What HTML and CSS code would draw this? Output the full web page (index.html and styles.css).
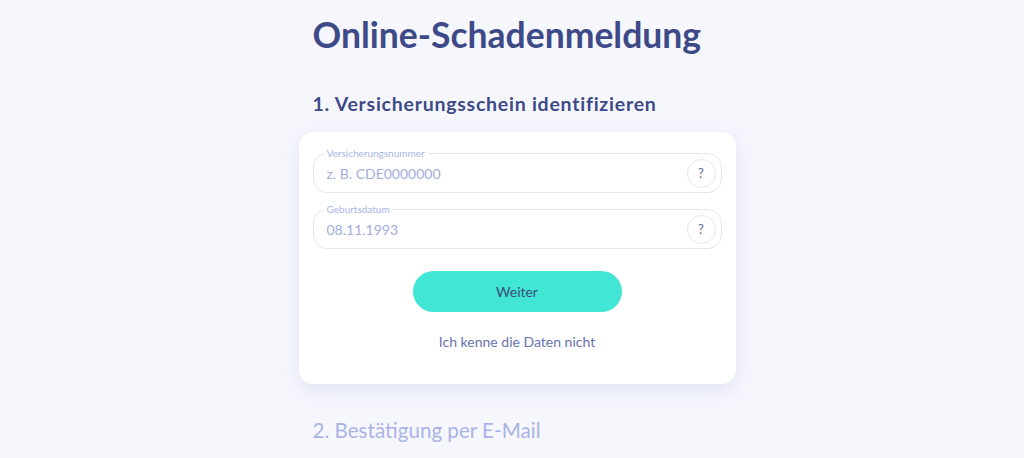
FILE: index.html
```html
<!DOCTYPE html>
<html lang="de">
<head>
  <meta charset="UTF-8">
  <meta name="viewport" content="width=device-width, initial-scale=1.0">
  <title>Online-Schadenmeldung</title>
  <link rel="stylesheet" href="styles.css">
</head>
<body>
  <main class="page">
    <h1 class="title">Online-Schadenmeldung</h1>

    <h2 class="step step-active">1. Versicherungsschein identifizieren</h2>
    <div class="card">
      <div class="field">
        <span class="field-label">Versicherungsnummer</span>
        <input class="field-input" type="text" placeholder="z. B. CDE0000000">
        <button class="help" type="button">?</button>
      </div>
      <div class="field">
        <span class="field-label">Geburtsdatum</span>
        <input class="field-input" type="text" placeholder="08.11.1993">
        <button class="help" type="button">?</button>
      </div>
      <button class="btn-next" type="button">Weiter</button>
      <a class="link" href="#">Ich kenne die Daten nicht</a>
    </div>

    <h2 class="step step-next">2. Bestätigung per E-Mail</h2>
  </main>
</body>
</html>
```

FILE: styles.css
```css
:root {
  --bg: #f6f7fd;
  --navy: #3d4a87;
  --muted: #a9b3e8;
  --border: #e3e6f3;
  --turquoise: #41e6d4;
}
body {
  margin: 0;
  padding-left: 10px;
  background: var(--bg);
  font-family: 'Lato', 'Open Sans', sans-serif;
  color: var(--navy);
}
.page {
  width: 437px;
  margin: 0 auto;
  padding-top: 14px;
}
.title {
  margin: 0 0 0 14px;
  font-size: 35.5px;
  font-weight: 700;
  line-height: 42px;
}
.step {
  margin: 0 0 0 14px;
  line-height: 24px;
}
.step-active {
  margin-top: 36px;
  font-size: 19.5px;
  font-weight: 700;
  letter-spacing: 0.75px;
}
.step-next {
  margin-top: 34px;
  font-weight: 400;
  font-size: 20.6px;
  color: var(--muted);
}
.card {
  margin-top: 16px;
  background: #fff;
  border-radius: 14px;
  box-shadow: 0 6px 18px rgba(180, 188, 230, 0.35);
  padding: 21px 14px 34px;
  display: flex;
  flex-direction: column;
  align-items: center;
}
.field {
  position: relative;
  width: 100%;
  height: 40px;
  box-sizing: border-box;
  border: 1px solid var(--border);
  border-radius: 14px;
  display: flex;
  align-items: center;
  padding: 0 5px 0 13px;
  margin-bottom: 16px;
}
.field:last-of-type {
  margin-bottom: 0;
}
.field-label {
  position: absolute;
  top: -7px;
  left: 10px;
  padding: 0 3px;
  background: #fff;
  font-size: 10px;
  line-height: 12px;
  color: var(--muted);
}
.field-input {
  flex: 1;
  border: none;
  outline: none;
  background: transparent;
  font-family: inherit;
  font-size: 14px;
  color: var(--navy);
  padding: 0;
}
.field-input::placeholder {
  color: #a4ade0;
}
.help {
  width: 29px;
  height: 29px;
  border-radius: 50%;
  border: 1px solid var(--border);
  background: #fff;
  color: #5f6a9c;
  font-family: inherit;
  font-size: 13px;
  font-weight: 400;
  padding: 0;
}
.btn-next {
  margin-top: 22px;
  width: 209px;
  height: 41px;
  border: none;
  border-radius: 21px;
  background: var(--turquoise);
  color: #3b4c7c;
  font-family: inherit;
  font-size: 14px;
}
.link {
  margin-top: 21px;
  font-size: 14px;
  color: #6a73b2;
  text-decoration: none;
}
```
